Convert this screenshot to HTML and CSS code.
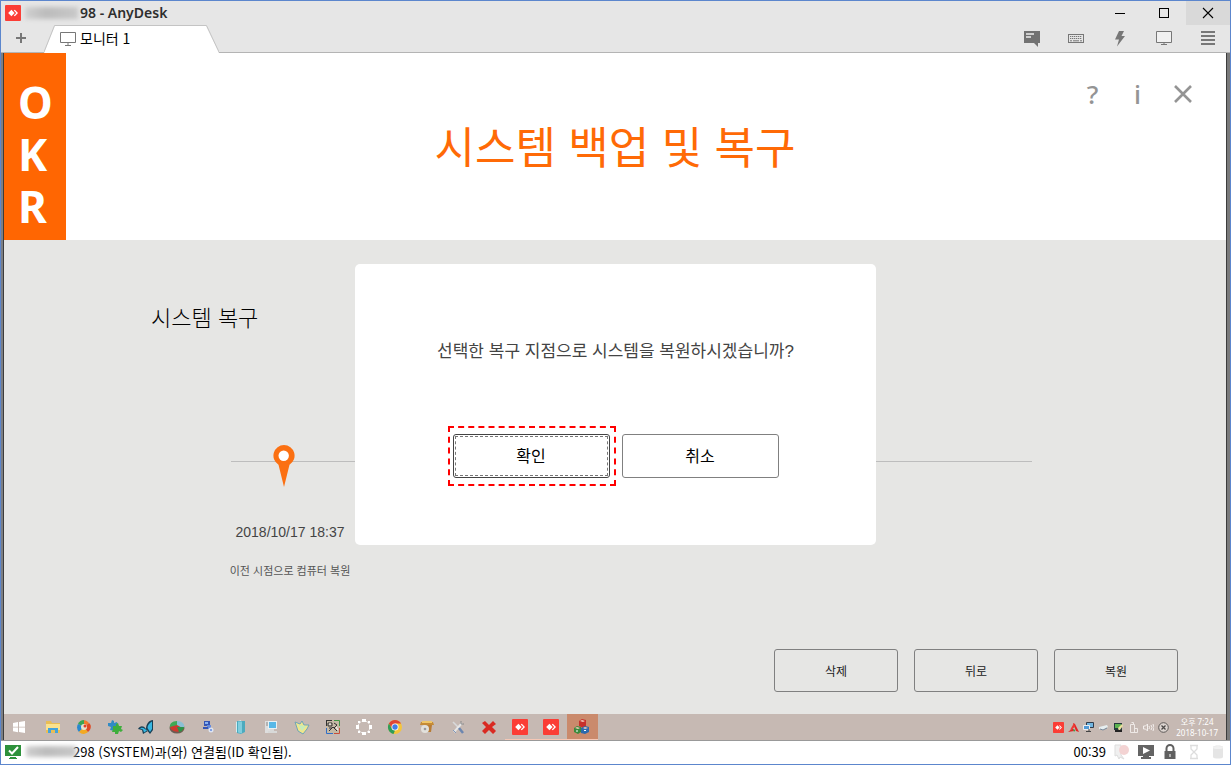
FILE: index.html
```html
<!DOCTYPE html>
<html lang="ko">
<head>
<meta charset="utf-8">
<meta name="viewport" content="width=device-width, initial-scale=1">
<title>98 - AnyDesk</title>
<link rel="stylesheet" href="styles.css">
</head>
<body>
<svg class="defs" aria-hidden="true">
  <symbol id="anydesk" viewBox="0 0 16 16"><rect width="16" height="16" rx="1" fill="#fb3d35"/><path d="M6.400 4.800 9.600 8l-3.200 3.200L3.200 8z" fill="#fff"/><path d="M8.800 5.600l1-.8L13 8l-3.200 3.200-1-.8L11.200 8z" fill="#fff"/></symbol>
</svg>
<div class="window">
  <header class="titlebar">
    <svg class="icon16"><use href="#anydesk"/></svg>
    <span class="masked masked-title"></span>
    <h1 class="title">98 - AnyDesk</h1>
    <div class="slots">
      <button class="slot" aria-label="최소화"><svg width="12" height="12"><path d="M1 6.500h10" stroke="#000"/></svg></button>
      <button class="slot" aria-label="최대화"><svg width="12" height="12"><rect x="1.500" y="1.500" width="9" height="9" fill="none" stroke="#000"/></svg></button>
      <button class="slot slot-close" aria-label="닫기"><svg width="12" height="12"><path d="M1 1l10 10M11 1 1 11" stroke="#000" stroke-width="1.100"/></svg></button>
    </div>
  </header>
  <nav class="tabbar">
    <button class="newtab" aria-label="새 탭"><svg width="12" height="12"><path d="M1 5h10M6 0v10" stroke="#777" stroke-width="2"/></svg></button>
    <button class="tab">
      <svg class="tab-shape" viewBox="0 0 175 28" preserveAspectRatio="none"><path d="M0 28 11 1h151l13 27z" fill="#fff"/><path d="M0 27 10.500.5h152L175 27" fill="none" stroke="#c4c4c4"/></svg>
      <svg class="tab-icon" width="16" height="14"><path d="M.5.5h15v10H.5z" fill="#fff" stroke="#777"/><path d="M8 11v2M5 13.500h6" stroke="#777"/></svg>
      <span class="tab-label">모니터 1</span>
    </button>
    <div class="slots">
      <button class="slot" aria-label="채팅"><svg width="16" height="16"><path d="M0 0h16v12h-2v4l-4-4H0z" fill="#727272"/><path d="M2 3h8M2 6h5" stroke="#eee" stroke-width="1.400"/></svg></button>
      <button class="slot" aria-label="키보드"><svg width="16" height="10"><rect x=".5" y=".5" width="15" height="8" fill="#e6e6e6" stroke="#777"/><path d="M2 2.500h12M2 4.500h12" stroke="#777" stroke-width="1.200" stroke-dasharray="1.300 .7"/><path d="M2 6.800h2M5 6.800h6M12 6.800h2" stroke="#777"/></svg></button>
      <button class="slot" aria-label="작업"><svg width="12" height="16"><path d="M5 0h5L7.500 5H11L3 15.500 5 8.500H1z" fill="#777"/></svg></button>
      <button class="slot" aria-label="디스플레이"><svg width="16" height="15"><path d="M.5.500h15v11H.5z" fill="#f1f1f1" stroke="#777"/><path d="M8 12v2M5 13.500h6" stroke="#777"/></svg></button>
      <button class="slot" aria-label="메뉴"><svg width="14" height="15"><path d="M0 1h14M0 5h14M0 9h14M0 13h14" stroke="#777" stroke-width="2"/></svg></button>
    </div>
  </nav>
  <main class="remote">
    <section class="hero">
      <div class="brand"><span>O</span><span>K</span><span>R</span></div>
      <h2 class="hero-title">시스템 백업 및 복구</h2>
      <div class="hero-tools">
        <button class="tool">?</button>
        <button class="tool">i</button>
        <button class="tool" aria-label="닫기"><svg width="18" height="18"><path d="M1 1l16 16M17 1 1 17" stroke="#949494" stroke-width="2.600"/></svg></button>
      </div>
    </section>
    <section class="stage">
      <h3 class="stage-title">시스템 복구</h3>
      <div class="timeline">
        <svg class="pin" width="22" height="42" viewBox="0 0 22 42"><path d="M11 0a10.700 10.700 0 0 1 5.500 19.800L11 42 5.500 19.800A10.700 10.700 0 0 1 11 0z" fill="#fb7012"/><circle cx="10.700" cy="10.800" r="5.200" fill="#fff"/></svg>
      </div>
      <div class="point">
        <p class="point-date">2018/10/17 18:37</p>
        <p class="point-note">이전 시점으로 컴퓨터 복원</p>
      </div>
      <div class="actions">
        <button class="action">삭제</button>
        <button class="action">뒤로</button>
        <button class="action">복원</button>
      </div>
      <div class="overlay">
        <div class="dialog" role="dialog" aria-labelledby="msg">
          <p class="message" id="msg">선택한 복구 지점으로 시스템을 복원하시겠습니까?</p>
          <div class="choices">
            <button class="choice choice-marked">확인</button>
            <button class="choice">취소</button>
          </div>
        </div>
      </div>
    </section>
    <div class="taskbar">
      <button class="start" aria-label="시작"><svg width="12" height="12"><path d="M0 2 5 1v4.700H0zM6 1l6-1v5.700H6zM0 6.500h5v4.700l-5-1zM6 6.500h6V12l-6-1z" fill="#fff"/></svg></button>
      <div class="apps">
        <span class="app"><svg class="icon16" viewBox="0 0 16 16"><path d="M1 2h5l1 2h8v10H1z" fill="#e9bd55"/><path d="M1 5h14v6H1z" fill="#fbe28d"/><path d="M3 9h10v5h-3v-3H6v3H3z" fill="#43a3dc"/></svg></span>
        <span class="app"><svg class="icon16" viewBox="0 0 16 16"><path d="M8 8V1a7 7 0 0 0-6 4z" fill="#3aa554"/><path d="M8 8 2 5a7 7 0 0 0 1 8z" fill="#2888cf"/><path d="M8 8l-5 5c3 3 7 2 9 0z" fill="#f3a922"/><path d="M8 8l4 5c3-2 4-7 1-9z" fill="#df4a25"/><path d="M8 8l5-4a7 7 0 0 0-5-3z" fill="#f17c2c"/><circle cx="8" cy="8" r="3" fill="#e8e3ce"/><circle cx="9" cy="7" r="1.500" fill="#e23b29"/></svg></span>
        <span class="app"><svg class="icon16" viewBox="0 0 16 16"><path d="M1 4l3 0 1-3 2 1 0 2 3-1 1 4-3 1 0 4-5-1 1-3-3-1z" fill="#318bc4"/><path d="M6 7l3 0 0-2 2-1 1 3 3 0-1 3 2 1-2 2-2-1-1 3-3 0 0-2-3 0 1-3z" fill="#3eae3c"/></svg></span>
        <span class="app"><svg class="icon16" viewBox="0 0 16 16"><path d="M8 10C8 5 11 1 15 1l0 10-3 4zM8 10C5 6 2 7 0 10l4 1 1 4 5-3z" fill="#173f55"/><path d="M9.500 9c0-3 2-5 4.500-6.500V10l-2 3zM7 10C5 8.500 3 8.500 2 9.500l3 1 1 3 3-2z" fill="#38b7e2"/></svg></span>
        <span class="app"><svg class="icon16" viewBox="0 0 16 16"><ellipse cx="8" cy="9" rx="7.500" ry="5.500" fill="#6b5d54"/><path d="M8 8V2C3 2 0 5 1 9z" fill="#3faa55"/><path d="M8 8V2c5 0 8 3 7 7z" fill="#8bc0d5"/><path d="M1 8l7-2 7 4c-2 4-12 4-14-2z" fill="#cd3a2f"/><path d="M8 8l7 0c0 4-4 5-5 5z" fill="#2d9248"/></svg></span>
        <span class="app"><svg class="icon16" viewBox="0 0 16 16"><path d="M4 2h6v5H4z" fill="#3656b5"/><path d="M7 6h4v4H7z" fill="#668bdd"/><path d="M3 8h5v2H3z" fill="#3656b5"/><circle cx="11" cy="11" r="2.500" fill="#dde4f1"/><circle cx="11" cy="11" r="1" fill="#668bdd"/><path d="M5 3h3v2H5z" fill="#89b4f2"/></svg></span>
        <span class="app"><svg class="icon16" viewBox="0 0 16 16"><path d="M4 3l5-2v14l-5-2z" fill="#d1eef2"/><path d="M5 2h8v11l-4 2-4-1z" fill="#4caabe"/><path d="M6 2.500h4v12l-4-1z" fill="#80cddd"/></svg></span>
        <span class="app"><svg class="icon16" viewBox="0 0 16 16"><path d="M2 2h5v12H2z" fill="#dedede"/><path d="M5 2h9v8H5z" fill="#e8f1f4"/><path d="M6 3h7v6H6z" fill="#57b8e7"/><path d="M7 10h4v2h3v2H5v-2h2z" fill="#d8d9d8"/><path d="M3 4h2M3 6h2" stroke="#888"/></svg></span>
        <span class="app"><svg class="icon16" viewBox="0 0 16 16"><path d="M1 3l5 2 2-3 2 4 5 0-2 4-4 5-5-3z" fill="#f0e68b" stroke="#6fa5b8"/><path d="M4 6l8 1-4 5z" fill="#c5edbb"/></svg></span>
        <span class="app"><svg class="icon16" viewBox="0 0 16 16"><path d="M1 1h14v14H1z" fill="#c5b9a5"/><path d="M1 1h6v1H1zM1 1h1v6H1z" fill="#333"/><path d="M9 1.500h5.500V7" fill="none" stroke="#429744"/><path d="M1.500 9v5.500H8" fill="none" stroke="#316fc9"/><path d="M9 14.500h5.500V9" fill="none" stroke="#c74d3a"/><path d="M3 4h4v3H3zM9 4l3 2-3 3M4 12l4-4 4 4M4 9h3" fill="none" stroke="#333"/><path d="M4 5h2M11 8l2 3" stroke="#fff"/></svg></span>
        <span class="app"><svg class="icon16" viewBox="0 0 16 16"><circle cx="8" cy="8" r="6" fill="none" stroke="#fff" stroke-dasharray="1.500 .8"/><path d="M6 0h4v3H6zM6 13h4v3H6zM0 6h3v4H0zM13 6h3v4h-3zM2 2h2v2H2zM12 2h2v2h-2zM2 12h2v2H2zM12 12h2v2h-2z" fill="#fff"/></svg></span>
        <span class="app"><svg class="icon16" viewBox="0 0 16 16"><circle cx="8" cy="8" r="7" fill="#f4c53c"/><path d="M1.900 4.500A7 7 0 0 1 14.100 4.500H8L5 9.700z" fill="#df4537"/><path d="M1.900 4.500 5 9.700 8 11.500 6.500 14.900A7 7 0 0 1 1.900 4.500z" fill="#2f9d58"/><circle cx="8" cy="8" r="3.500" fill="#fff"/><circle cx="8" cy="8" r="2.700" fill="#417ee7"/></svg></span>
        <span class="app"><svg class="icon16" viewBox="0 0 16 16"><path d="M2 3h12l1 3H1z" fill="#c58b37"/><path d="M3 2h10v2H3z" fill="#efc668"/><path d="M6 6h7l-1 7H7z" fill="#b87c35"/><circle cx="6" cy="10" r="4" fill="#e2e1dc"/><circle cx="6" cy="10" r="1.300" fill="#999"/></svg></span>
        <span class="app"><svg class="icon16" viewBox="0 0 16 16"><path d="M3 3l7 7" stroke="#d8d9db" stroke-width="1.600"/><path d="M12 4 4 13" stroke="#e6e6e6" stroke-width="2"/><path d="M9 9l4 5" stroke="#6c86b0" stroke-width="2.500"/><path d="M11 2v3h3" fill="none" stroke="#888"/><path d="M3 11l3 3" stroke="#7f96b8"/></svg></span>
        <span class="app"><svg class="icon16" viewBox="0 0 16 16"><path d="M1 4l3-2 4 4 4-4 3 3-4 3 4 4-3 3-4-4-4 4-3-3 4-4z" fill="#d92a22"/></svg></span>
        <span class="app app-running"><svg class="icon16"><use href="#anydesk"/></svg></span>
        <span class="app app-running"><svg class="icon16"><use href="#anydesk"/></svg></span>
        <span class="app app-active"><svg class="icon16" viewBox="0 0 16 16"><path d="M5 2l3-2 4 1v6l-3 2-4-2z" fill="#c6302c"/><path d="M0 9l3-2 4 1v5l-3 2-4-2z" fill="#398b3d"/><path d="M7 9l4-2 4 1v5l-4 2-4-1z" fill="#2c6aae"/><path d="M6 2l2-1 3 1-2 1zM1 9l2-1 3 1-2 1zM9 9l2-1 3 1-3 1z" fill="#efc7b8"/><path d="M3 11v2M10 11.500h2" stroke="#fff" fill="none"/></svg></span>
      </div>
      <div class="tray">
        <span class="tray-item"><svg class="icon11" viewBox="0 0 16 16"><use href="#anydesk"/></svg></span>
        <span class="tray-item"><svg class="icon11" viewBox="0 0 11 11"><path d="M0 10 5 6l1 3zM5 1l2 1 4 8-3-1z" fill="#e32525"/><path d="M2 8l4-7 1 4z" fill="#f03a32"/><path d="M5 7l1 3 1.500-2z" fill="#3b9d43"/></svg></span>
        <span class="tray-item"><svg class="icon11" viewBox="0 0 11 11"><path d="M3.500.5h7v5h-7z" fill="#70b5e1" stroke="#303c4c"/><path d="M.5 3.500h6v4h-6z" fill="#529bd8" stroke="#eee"/><path d="M3 9.500h5M6 7v3" stroke="#444"/></svg></span>
        <span class="tray-item"><svg class="icon11" viewBox="0 0 11 11"><path d="M1 5l8-2 1 2-5 3-4-1z" fill="#e6eef0"/><path d="M2 7l3 1 4-2" stroke="#789" fill="none"/></svg></span>
        <span class="tray-item"><svg class="icon11" viewBox="0 0 11 11"><path d="M1 1h8v7H1z" fill="#243b3c"/><path d="M2 2h6v4H2z" fill="#5bb24f"/><path d="M5 6l4-4 1 2-4 5z" fill="#e8df9d"/><path d="M2 9h7" stroke="#222" stroke-width="2"/></svg></span>
        <span class="tray-item"><svg class="icon11" viewBox="0 0 11 11"><path d="M2.500 2.500h4v8h-4zM3.500.5h2v2M7 6.500h2.500v4H6" fill="none" stroke="#eee9e6"/></svg></span>
        <span class="tray-item"><svg class="icon11" viewBox="0 0 11 11"><path d="M.5 4h2l2-2v7l-2-2h-2zM6 4q1 1.500 0 3M8 3q2 2.500 0 5M10 2q2 3.500 0 7" fill="none" stroke="#f3efed"/></svg></span>
        <span class="tray-item"><svg class="icon11" viewBox="0 0 11 11"><circle cx="5.500" cy="5.500" r="4.800" fill="#ddd5d1" stroke="#5e5a58"/><path d="M3.500 3.500l4 4M7.500 3.500l-4 4" stroke="#4c4947" stroke-width="1.300"/></svg></span>
        <div class="clock"><span>오후 7:24</span><span>2018-10-17</span></div>
      </div>
    </div>
  </main>
  <footer class="status">
    <svg class="icon16" viewBox="0 0 16 16"><path d="M0 1h16v11H0z" fill="#2d913b"/><path d="M5 13h6v1h1v1H4v-1h1z" fill="#2d913b"/><path d="M4 6.500l3 3 6-6.500" fill="none" stroke="#fff" stroke-width="2"/></svg>
    <span class="masked masked-status"></span>
    <span class="status-text">298 (SYSTEM)과(와) 연결됨(ID 확인됨).</span>
    <div class="status-right">
      <span>00:39</span>
      <svg class="icon16" viewBox="0 0 16 16"><path d="M1 1h6v10l3 4-4-2-1 2-2-4-2 1z" fill="#f0f0f0" stroke="#ddd"/><circle cx="10" cy="6" r="5" fill="#f3d3d3"/></svg>
      <svg class="icon16" viewBox="0 0 16 16"><path d="M0 1h16v11h-5v1h2v2H3v-2h2v-1H0z" fill="#646464"/><path d="M5 3l7 3.500L5 10z" fill="#fff"/></svg>
      <svg class="icon16" viewBox="0 0 16 16"><path d="M4.500 8V4.500a3.500 3.500 0 0 1 7 0V8" fill="none" stroke="#606060" stroke-width="2"/><path d="M2.500 7h11v8h-11z" fill="#606060"/><path d="M8 10v3" stroke="#fff"/></svg>
      <svg class="icon16" viewBox="0 0 16 16"><path d="M4 1.500h8M4 14.500h8M5 2v3l3 3 3-3V2M5 14v-3l3-3 3 3v3" fill="none" stroke="#ddd" stroke-width="1.300"/></svg>
      <svg class="icon16" viewBox="0 0 16 16"><path d="M3 3c0-2 10-2 10 0v10c0 2-10 2-10 0z" fill="#e5e5e5"/><ellipse cx="8" cy="3.500" rx="5" ry="1.500" fill="#f1f1f1"/></svg>
    </div>
  </footer>
</div>
</body>
</html>
```
FILE: styles.css
```css
* { box-sizing: border-box; }

body {
  margin: 0;
  font-family: "Noto Sans CJK KR", sans-serif;
  color: #000;
}

h1, h2, h3, p { margin: 0; font-weight: 400; }

button {
  padding: 0;
  border: 0;
  background: none;
  color: inherit;
  font: inherit;
}

svg { display: block; flex: none; }
.defs { position: absolute; width: 0; height: 0; }
.icon16 { width: 16px; height: 16px; }
.icon11 { width: 11px; height: 11px; }

.window {
  display: flex;
  flex-direction: column;
  min-height: 100vh;
  border: 1px solid #5c86cd;
  background: #e6e6e6;
}

/* Title bar */
.titlebar {
  display: flex;
  align-items: center;
  height: 24px;
  padding-left: 4px;
}

.masked {
  position: relative;
  z-index: 1;
  background: linear-gradient(90deg, #d0d0d0, #bcbcbc 40%, #c8c8c8);
  filter: blur(2px);
}

.masked-title { width: 53px; height: 12px; margin: 0 2px 0 4px; }

.title {
  flex: 1;
  font: 600 14px/24px "Noto Sans", "Noto Sans CJK KR", sans-serif;
  color: #2e2e2e;
}

.slots { display: flex; height: 100%; margin-left: auto; }
.slot { display: grid; place-items: center; width: 44px; height: 100%; }
.slot-close { background: #d9d9d9; }

/* Tabs */
.tabbar {
  display: flex;
  height: 28px;
  padding-bottom: 1px;
  box-shadow: inset 0 -1px #b4b4b4;
}

.newtab { display: grid; place-items: center; width: 40px; }

.tab {
  position: relative;
  display: flex;
  align-items: center;
  gap: 4px;
  width: 175px;
  height: 28px;
  margin-left: 3px;
  padding-left: 16px;
}

.tab-shape { position: absolute; inset: 0; width: 100%; height: 100%; }
.tab-icon, .tab-label { position: relative; }
.tab-label { padding-bottom: 2px; font-size: 14px; line-height: 24px; }

/* Remote screen */
.remote {
  flex: 1;
  display: flex;
  flex-direction: column;
  border: solid #3c3c3c;
  border-width: 0 1px;
  margin: 0 3px 0 2px;
  box-shadow: -2px 0 #7c7f84, 3px 0 #7a7a7a;
  background: #e6e6e4;
}

.hero {
  display: grid;
  grid-template-columns: 1fr auto 1fr;
  height: 187px;
  background: #fff;
}

.brand {
  display: flex;
  flex-direction: column;
  width: 62px;
  padding: 23px 0 0 14px;
  background: #ff6602;
  color: #fff;
  font: 700 44px/52px "Noto Sans", sans-serif;
}

.hero-title {
  padding-top: 60px;
  font-size: 44px;
  line-height: 64px;
  color: #ff6a06;
}

.hero-tools {
  display: flex;
  justify-content: flex-end;
  padding: 22px 21px 0 0;
}

.tool {
  display: grid;
  place-items: center;
  width: 45px;
  height: 38px;
  font: 500 26px/38px "Noto Sans", sans-serif;
  color: #949494;
}

.stage {
  position: relative;
  flex: 1;
  display: flex;
  flex-direction: column;
  padding: 60px 48px 22px 147px;
}

.stage-title {
  font-size: 22px;
  font-weight: 300;
  line-height: 32px;
  color: #000;
}

.timeline {
  height: 42px;
  margin: 113px 146px 0 80px;
  padding-left: 42px;
  background: linear-gradient(#bdbdbd, #bdbdbd) 0 16px / 100% 1px no-repeat;
}

.point {
  width: 194px;
  margin: 35px 0 0 42px;
  text-align: center;
}

.point-date { font: 14px/20px "Liberation Sans", sans-serif; color: #444; }
.point-note { margin-top: 18px; font-size: 11px; line-height: 20px; color: #555; }

.actions {
  display: flex;
  justify-content: flex-end;
  gap: 16px;
  margin-top: auto;
}

.action {
  width: 124px;
  height: 43px;
  border: 1px solid #808080;
  border-radius: 3px;
  font-size: 12px;
  color: #222;
}

/* Confirmation dialog */
.overlay {
  position: absolute;
  inset: 0;
  display: flex;
  justify-content: center;
  align-items: flex-start;
  padding-top: 24px;
}

.dialog {
  width: 521px;
  padding: 74px 0 67px 1px;
  border-radius: 5px;
  background: #fff;
  text-align: center;
}

.message {
  font: 17px/27px "Liberation Sans", "Noto Sans CJK KR", sans-serif;
  color: #444;
}

.choices { display: flex; justify-content: center; gap: 12px; margin-top: 69px; }

.choice {
  position: relative;
  width: 157px;
  height: 44px;
  padding-bottom: 2px;
  border: 1px solid #808080;
  border-radius: 3px;
  font-size: 16px;
}

.choice-marked { border-color: #444; }

.choice-marked::before {
  content: "";
  position: absolute;
  inset: 1px;
  border: 1px dashed #777;
}

.choice-marked::after {
  content: "";
  position: absolute;
  inset: -9px -7px -9px -6px;
  border: 2px dashed #f00;
}

/* Remote taskbar */
.taskbar {
  display: flex;
  height: 26px;
  background: #c6b9b3;
}

.start { display: grid; place-items: center; width: 30px; margin-right: 3px; }
.apps { display: flex; justify-content: space-between; width: 561px; }
.app { display: grid; place-items: center; width: 31px; height: 26px; }
.app-running { border-bottom: 1px solid #f6c8b6; }
.app-active { background: #ca8a6c; border-bottom: 1px solid #f6c8b6; }

.tray { display: flex; align-items: center; margin-left: auto; padding-right: 8px; }
.tray-item { display: grid; place-items: center; width: 15px; }

.clock {
  display: flex;
  flex-direction: column;
  align-items: center;
  margin-left: 5px;
  font: 8px/11px "Noto Sans", "Noto Sans CJK KR", sans-serif;
  color: #fff;
}

/* Status bar */
.status {
  display: flex;
  align-items: center;
  height: 24px;
  padding: 0 4px 2px;
  border-top: 1px solid #999;
  background: #fff;
  font-size: 13px;
}

.masked-status { width: 50px; height: 11px; margin: 0 -3px 0 5px; }
.status-right { display: flex; align-items: center; gap: 8px; margin-left: auto; }
```
